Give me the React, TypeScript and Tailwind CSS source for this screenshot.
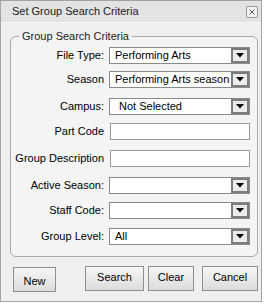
import React from "react";

const font = { fontFamily: '"Liberation Sans", Arial, sans-serif' };

function Arrow() {
  return (
    <div className="w-[18px] h-full border-2 border-[#7c7c7c] bg-[#ececec] flex items-center justify-center">
      <svg width="8" height="5" viewBox="0 0 8 5">
        <path d="M0 0 H8 L4 4.5 Z" fill="#000" />
      </svg>
    </div>
  );
}

function Row({ label, top, kind, value, indent }: { label: string; top: number; kind: "select" | "input"; value?: string; indent?: boolean }) {
  return (
    <div className="flex items-center h-[17px]" style={{ marginTop: top }}>
      <div className="w-[98px] text-right pr-[5px] text-[11px] text-black leading-none whitespace-nowrap">{label}</div>
      {kind === "select" ? (
        <div className="w-[141px] h-[17px] border border-[#8a8a8a] bg-white flex items-stretch">
          <div className={(indent ? "pl-[9px] " : "pl-[5px] ") + "flex-1 text-[11px] text-black leading-[15px] whitespace-nowrap overflow-hidden"}>{value}</div>
          <Arrow />
        </div>
      ) : (
        <div className="w-[140px] ml-[1px] h-[17px] border border-[#9a9a9a] bg-white" />
      )}
    </div>
  );
}

export default function App() {
  return (
    <div className="w-[265px] h-[304px] bg-white" style={font}>
      <div className="w-[262px] h-[302px] border border-[#a3a3a3] bg-[#efefef] flex flex-col">
        <div className="h-[22px] bg-[#e3e3e3] flex items-center justify-between pl-[11px] pr-[3px] border-b border-[#f8f8f8]">
          <span className="text-[11px] text-[#222] leading-none">Set Group Search Criteria</span>
          <div className="w-[12px] h-[12px] border border-[#9a9a9a] rounded-[2px] bg-[#f2f2f2] flex items-center justify-center">
            <svg width="6" height="6" viewBox="0 0 6 6">
              <path d="M0.5 0.5 L5.5 5.5 M5.5 0.5 L0.5 5.5" stroke="#555" strokeWidth="1" />
            </svg>
          </div>
        </div>
        <fieldset className="ml-[9px] mr-[3px] mt-[8px] h-[226px] border border-[#a8a8a8] rounded-[6px] bg-[#f4f4f4] px-0 pt-0 pb-0">
          <legend className="ml-[8px] px-[3px] text-[11px] text-[#222] leading-none">Group Search Criteria</legend>
          <div className="flex flex-col">
            <Row label="File Type:" top={5} kind="select" value="Performing Arts" />
            <Row label="Season" top={7} kind="select" value="Performing Arts season" />
            <Row label="Campus:" top={10} kind="select" value="Not Selected" indent />
            <Row label="Part Code" top={8} kind="input" />
            <Row label="Group Description" top={10} kind="input" />
            <Row label="Active Season:" top={10} kind="select" value="" />
            <Row label="Staff Code:" top={8} kind="select" value="" />
            <Row label="Group Level:" top={9} kind="select" value="All" />
          </div>
        </fieldset>
        <div className="flex items-start mt-[9px]">
          <button className="ml-[12px] mt-[1px] w-[43px] h-[25px] border border-[#8e8e8e] bg-gradient-to-b from-[#f6f6f6] to-[#dcdcdc] text-[11px] text-black pt-[3px]">New</button>
          <button className="ml-[29px] w-[59px] h-[25px] border border-[#8e8e8e] bg-gradient-to-b from-[#f6f6f6] to-[#dcdcdc] text-[11px] text-black pb-[3px]">Search</button>
          <button className="ml-[4px] w-[46px] h-[25px] border border-[#8e8e8e] bg-gradient-to-b from-[#f6f6f6] to-[#dcdcdc] text-[11px] text-black pb-[3px]">Clear</button>
          <button className="ml-[8px] w-[56px] h-[25px] border border-[#8e8e8e] bg-gradient-to-b from-[#f6f6f6] to-[#dcdcdc] text-[11px] text-black pb-[3px]">Cancel</button>
        </div>
      </div>
    </div>
  );
}
